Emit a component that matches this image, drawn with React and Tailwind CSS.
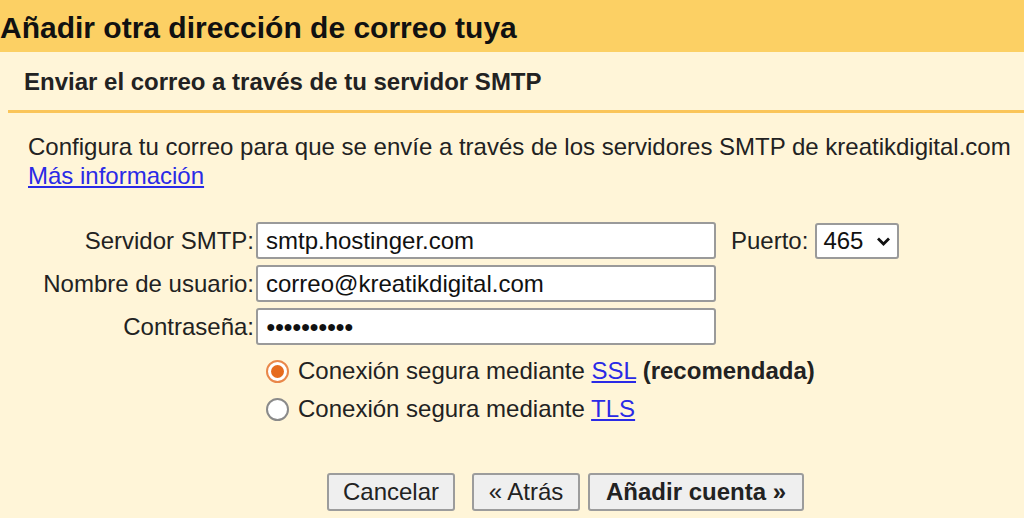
import React from "react";

const font = { fontFamily: '"Liberation Sans", Arial, sans-serif' };

function Field({ label, children }) {
  return (
    <div className="flex items-center">
      <div className="w-[256px] shrink-0 pr-[2px] text-right text-[24px] leading-[28px] text-[#222]">{label}</div>
      {children}
    </div>
  );
}

function TextBox({ value }) {
  return (
    <div className="flex h-[37px] w-[460px] items-center rounded-[3px] border-2 border-[#9a9a9a] bg-white px-[8px] text-[24px] text-[#111]">
      {value}
    </div>
  );
}

function Radio({ checked }) {
  return checked ? (
    <span className="flex h-[23px] w-[23px] shrink-0 items-center justify-center rounded-full border-2 border-[#e9874a] bg-white">
      <span className="h-[13px] w-[13px] rounded-full bg-[#e66a1d]" />
    </span>
  ) : (
    <span className="h-[23px] w-[23px] shrink-0 rounded-full border-2 border-[#8a8a8a] bg-white" />
  );
}

function Btn({ children, bold, w }) {
  return (
    <button className={`h-[38px] rounded-[3px] border-2 border-[#9c9c9c] bg-[#efefef] text-[24px] leading-[28px] text-[#222] ${bold ? "font-bold" : ""} ${w}`}>
      {children}
    </button>
  );
}

export default function App() {
  return (
    <div style={font} className="h-[518px] w-[1024px] overflow-hidden bg-[#fff5d8]">
      <div className="flex h-[52px] items-center bg-[#fcd064] pt-[4px]">
        <h1 className="text-[30px] font-bold leading-[34px] text-[#111]">Añadir otra dirección de correo tuya</h1>
      </div>
      <div className="ml-[8px] border-b-[3px] border-[#fac55a] pb-[14px] pl-[16px] pt-[16px]">
        <h2 className="text-[24px] font-bold leading-[28px] text-[#222]">Enviar el correo a través de tu servidor SMTP</h2>
      </div>
      <div className="pl-[28px] pt-[19px] text-[24px] leading-[29px] text-[#222]">
        <p>Configura tu correo para que se envíe a través de los servidores SMTP de kreatikdigital.com</p>
        <a href="#" className="text-[#2a2ae6] underline">Más información</a>
      </div>
      <div className="mt-[32px] flex flex-col gap-[6px]">
        <Field label="Servidor SMTP:">
          <TextBox value="smtp.hostinger.com" />
          <span className="ml-[15px] text-[24px] text-[#222]">Puerto:</span>
          <div className="ml-[7px] flex h-[36px] w-[84px] items-center justify-between rounded-[3px] border-2 border-[#9a9a9a] bg-white pl-[6px] pr-[6px] text-[24px] text-[#111]">
            465
            <svg width="15" height="11" viewBox="0 0 15 11" className="mt-[2px]">
              <path d="M2 2.5 L7.5 8 L13 2.5" fill="none" stroke="#111" strokeWidth="2.8" />
            </svg>
          </div>
        </Field>
        <Field label="Nombre de usuario:">
          <TextBox value="correo@kreatikdigital.com" />
        </Field>
        <Field label="Contraseña:">
          <TextBox value={<span className="tracking-[-1px] text-[16px]">●●●●●●●●●●</span>} />
        </Field>
      </div>
      <div className="ml-[266px] mt-[12px] flex flex-col gap-[10px] text-[24px] leading-[28px] text-[#222]">
        <label className="flex items-center gap-[9px]">
          <Radio checked />
          <span>
            Conexión segura mediante <a href="#" className="text-[#2a2ae6] underline">SSL</a> <b>(recomendada)</b>
          </span>
        </label>
        <label className="flex items-center gap-[9px]">
          <Radio />
          <span>
            Conexión segura mediante <a href="#" className="text-[#2a2ae6] underline">TLS</a>
          </span>
        </label>
      </div>
      <div className="ml-[327px] mt-[50px] flex">
        <Btn w="w-[128px]">Cancelar</Btn>
        <Btn w="ml-[17px] w-[108px]">« Atrás</Btn>
        <Btn bold w="ml-[8px] w-[216px]">Añadir cuenta »</Btn>
      </div>
    </div>
  );
}
